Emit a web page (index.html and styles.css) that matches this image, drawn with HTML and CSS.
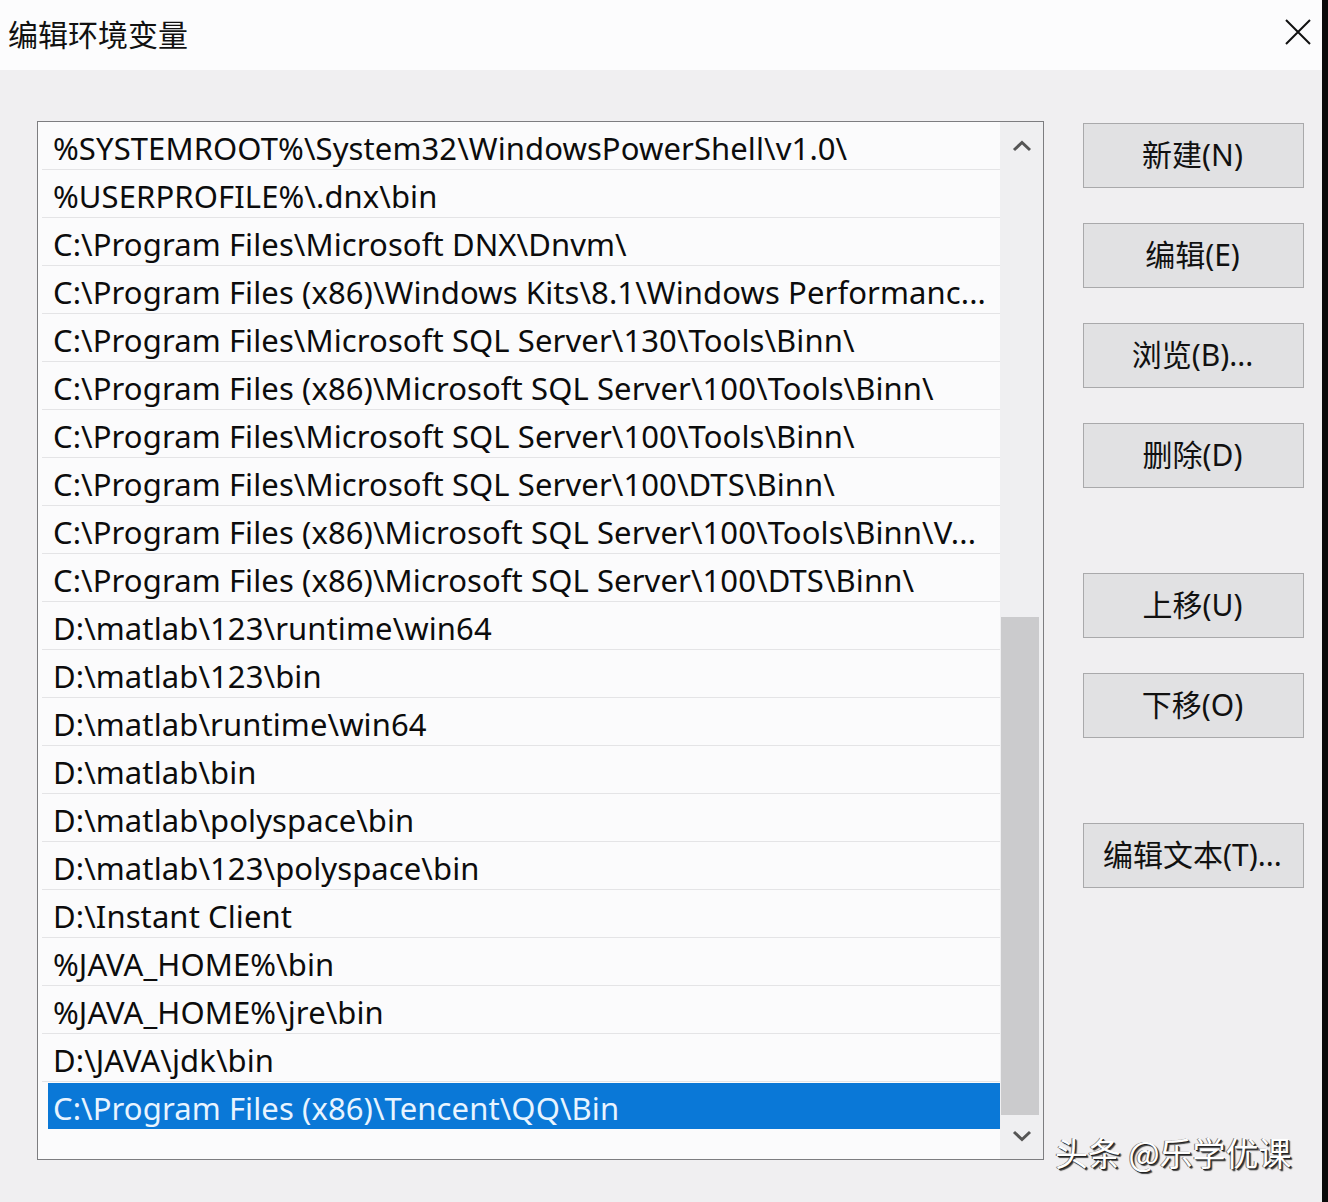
FILE: index.html
```html
<!DOCTYPE html>
<html lang="zh-CN">
<head>
<meta charset="utf-8">
<title>编辑环境变量</title>
<link rel="stylesheet" href="styles.css">
</head>
<body>
<div class="dialog">
  <div class="titlebar">
    <span class="title">编辑环境变量</span>
    <span class="close">
      <svg width="26" height="26" viewBox="0 0 26 26"><path d="M1 1 L25 25 M25 1 L1 25" stroke="#111" stroke-width="2" fill="none"/></svg>
    </span>
  </div>
  <div class="content">
    <div class="listbox">
      <div class="rows">
        <div class="row"><span class="cell">%SYSTEMROOT%\System32\WindowsPowerShell\v1.0\</span></div>
        <div class="row"><span class="cell">%USERPROFILE%\.dnx\bin</span></div>
        <div class="row"><span class="cell">C:\Program Files\Microsoft DNX\Dnvm\</span></div>
        <div class="row"><span class="cell">C:\Program Files (x86)\Windows Kits\8.1\Windows Performanc...</span></div>
        <div class="row"><span class="cell">C:\Program Files\Microsoft SQL Server\130\Tools\Binn\</span></div>
        <div class="row"><span class="cell">C:\Program Files (x86)\Microsoft SQL Server\100\Tools\Binn\</span></div>
        <div class="row"><span class="cell">C:\Program Files\Microsoft SQL Server\100\Tools\Binn\</span></div>
        <div class="row"><span class="cell">C:\Program Files\Microsoft SQL Server\100\DTS\Binn\</span></div>
        <div class="row"><span class="cell">C:\Program Files (x86)\Microsoft SQL Server\100\Tools\Binn\V...</span></div>
        <div class="row"><span class="cell">C:\Program Files (x86)\Microsoft SQL Server\100\DTS\Binn\</span></div>
        <div class="row"><span class="cell">D:\matlab\123\runtime\win64</span></div>
        <div class="row"><span class="cell">D:\matlab\123\bin</span></div>
        <div class="row"><span class="cell">D:\matlab\runtime\win64</span></div>
        <div class="row"><span class="cell">D:\matlab\bin</span></div>
        <div class="row"><span class="cell">D:\matlab\polyspace\bin</span></div>
        <div class="row"><span class="cell">D:\matlab\123\polyspace\bin</span></div>
        <div class="row"><span class="cell">D:\Instant Client</span></div>
        <div class="row"><span class="cell">%JAVA_HOME%\bin</span></div>
        <div class="row"><span class="cell">%JAVA_HOME%\jre\bin</span></div>
        <div class="row"><span class="cell">D:\JAVA\jdk\bin</span></div>
        <div class="row selected"><span class="cell">C:\Program Files (x86)\Tencent\QQ\Bin</span></div>
      </div>
      <div class="scrollbar">
        <div class="arrow up">
          <svg width="20" height="12" viewBox="0 0 20 12"><path d="M2 10 L10 2.5 L18 10" stroke="#555" stroke-width="3" fill="none" stroke-linejoin="miter"/></svg>
        </div>
        <div class="track">
          <div class="thumb"></div>
        </div>
        <div class="arrow down">
          <svg width="20" height="12" viewBox="0 0 20 12"><path d="M2 2 L10 9.5 L18 2" stroke="#555" stroke-width="3" fill="none" stroke-linejoin="miter"/></svg>
        </div>
      </div>
    </div>
    <div class="buttons">
      <div class="btn">新建(N)</div>
      <div class="btn">编辑(E)</div>
      <div class="btn">浏览(B)...</div>
      <div class="btn">删除(D)</div>
      <div class="btn gap-lg">上移(U)</div>
      <div class="btn">下移(O)</div>
      <div class="btn gap-lg">编辑文本(T)...</div>
    </div>
    <div class="watermark">头条 @乐学优课</div>
  </div>
</div>
</body>
</html>
```

FILE: styles.css
```css
html, body {
  margin: 0;
  padding: 0;
  background: #0a0a0a;
}
body {
  width: 1328px;
  height: 1202px;
  overflow: hidden;
  font-family: "Noto Sans", "Noto Sans CJK SC", sans-serif;
}
.dialog {
  width: 1322px;
  height: 1202px;
  background: #f0eff1;
  display: flex;
  flex-direction: column;
}
.titlebar {
  height: 70px;
  background: #fcfcfd;
  display: flex;
  align-items: center;
  justify-content: space-between;
  padding: 0 11px 0 8px;
  box-sizing: border-box;
}
.title {
  font-family: "Noto Sans CJK SC", sans-serif;
  font-size: 30px;
  color: #111;
  margin-top: -5px;
}
.close {
  display: flex;
  margin-top: -6px;
}
.content {
  flex: 1;
  position: relative;
  display: flex;
  align-items: flex-start;
  padding: 51px 0 0 37px;
}
.listbox {
  width: 1007px;
  height: 1039px;
  box-sizing: border-box;
  border: 1px solid #7d7d80;
  background: #fbfbfc;
  display: flex;
}
.rows {
  width: 962px;
  padding-left: 4px;
  box-sizing: border-box;
  display: flex;
  flex-direction: column;
}
.row {
  height: 48px;
  box-sizing: border-box;
  border-bottom: 1px solid #e4e4e6;
  display: flex;
}
.row.selected {
  border-bottom: none;
  padding-top: 1px;
}
.cell {
  margin-left: 6px;
  padding-left: 5px;
  padding-top: 5px;
  box-sizing: border-box;
  flex: 1;
  display: flex;
  align-items: center;
  font-size: 31px;
  color: #0c0c0c;
  white-space: nowrap;
  letter-spacing: 0.1px;
}
.row.selected .cell {
  background: #0a78d7;
  color: #e8f4ff;
  height: 46px;
  padding-top: 3px;
}
.scrollbar {
  width: 43px;
  background: #efeff1;
  display: flex;
  flex-direction: column;
}
.arrow {
  height: 44px;
  display: flex;
  justify-content: center;
  align-items: center;
}
.arrow.up {
  align-items: flex-start;
  padding-top: 18px;
  box-sizing: border-box;
}
.arrow.down {
  height: 44px;
  align-items: flex-start;
  padding-top: 15px;
  box-sizing: border-box;
}
.track {
  flex: 1;
  display: flex;
  flex-direction: column;
  justify-content: flex-end;
  padding: 0 4px 0 1px;
}
.thumb {
  height: 498px;
  background: #cbcbcd;
}
.buttons {
  display: flex;
  flex-direction: column;
  margin-left: 39px;
  padding-top: 2px;
  gap: 35px;
}
.btn {
  width: 221px;
  height: 65px;
  box-sizing: border-box;
  border: 1px solid #a9a9ab;
  background: #e1e1e3;
  display: flex;
  align-items: center;
  justify-content: center;
  padding-bottom: 5px;
  padding-right: 2px;
  font-family: "Noto Sans", "Noto Sans CJK SC", sans-serif;
  font-size: 30px;
  color: #111;
}
.btn.gap-lg {
  margin-top: 50px;
}
.watermark {
  position: absolute;
  left: 1055px;
  top: 1058px;
  font-family: "Noto Sans CJK SC", sans-serif;
  font-size: 33px;
  color: #ffffff;
  text-shadow: 1px 1px 0 #222, 2px 2px 1px #444, -1px 0 0 #777;
}
```
